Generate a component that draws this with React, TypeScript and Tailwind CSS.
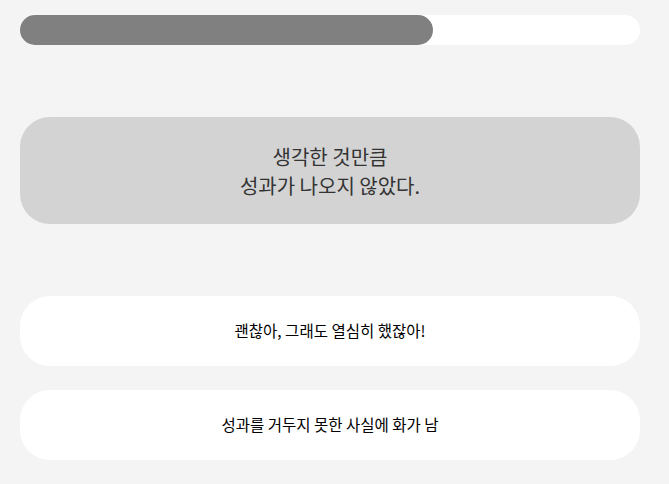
export default function App() {
  const font = { fontFamily: '"Noto Sans CJK KR", "Noto Sans", sans-serif' };
  return (
    <div className="min-h-[484px] w-full bg-[#f4f4f4] pl-5 pr-[29px] pt-[15px] pb-6" style={font}>
      <div className="h-[30px] w-full rounded-full bg-white">
        <div className="h-full w-[413px] rounded-full bg-[#808080]" />
      </div>
      <div className="mt-[72px] flex h-[107px] flex-col items-center justify-center rounded-[30px] bg-[#d3d3d3] text-center text-[20px] leading-[29px] text-[#333333]">
        <div>생각한 것만큼</div>
        <div>성과가 나오지 않았다.</div>
      </div>
      <div className="mt-[72px] flex flex-col gap-6">
        <button className="flex h-[70px] w-full items-center justify-center rounded-[30px] bg-white text-[15.5px] text-black">
          괜찮아, 그래도 열심히 했잖아!
        </button>
        <button className="flex h-[70px] w-full items-center justify-center rounded-[30px] bg-white text-[15.5px] text-black">
          성과를 거두지 못한 사실에 화가 남
        </button>
      </div>
    </div>
  );
}
